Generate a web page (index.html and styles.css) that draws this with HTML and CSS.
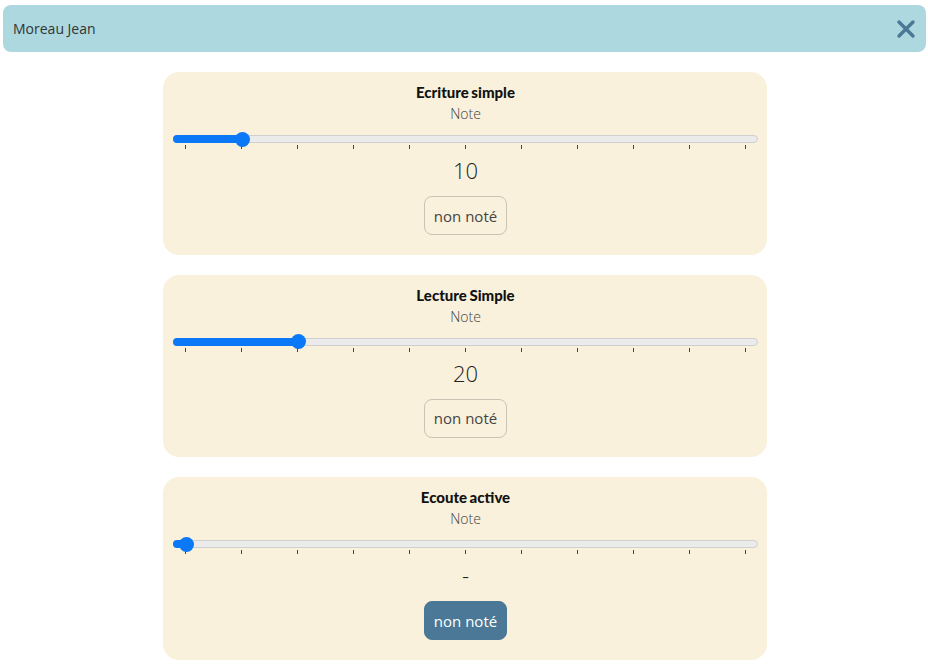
FILE: index.html
```html
<!DOCTYPE html>
<html lang="fr">
<head>
<meta charset="utf-8">
<link rel="stylesheet" href="styles.css">
</head>
<body>
<header class="topbar">
  <span class="name">Moreau Jean</span>
  <button class="close" aria-label="Fermer">
    <svg width="20" height="20" viewBox="0 0 20 20"><path d="M3 3L17 17M17 3L3 17" stroke="#4a7896" stroke-width="3.4" stroke-linecap="round"/></svg>
  </button>
</header>
<main class="list">
  <section class="card">
    <h2 class="title">Ecriture simple</h2>
    <div class="label">Note</div>
    <div class="slider">
      <div class="track"><div class="fill" style="width:68px"></div><div class="thumb" style="left:68px"></div></div>
      <div class="ticks"><i></i><i></i><i></i><i></i><i></i><i></i><i></i><i></i><i></i><i></i><i></i></div>
    </div>
    <div class="value">10</div>
    <button class="btn">non noté</button>
  </section>
  <section class="card">
    <h2 class="title">Lecture Simple</h2>
    <div class="label">Note</div>
    <div class="slider">
      <div class="track"><div class="fill" style="width:124px"></div><div class="thumb" style="left:124px"></div></div>
      <div class="ticks"><i></i><i></i><i></i><i></i><i></i><i></i><i></i><i></i><i></i><i></i><i></i></div>
    </div>
    <div class="value">20</div>
    <button class="btn">non noté</button>
  </section>
  <section class="card">
    <h2 class="title">Ecoute active</h2>
    <div class="label">Note</div>
    <div class="slider">
      <div class="track"><div class="fill" style="width:12px"></div><div class="thumb" style="left:12px"></div></div>
      <div class="ticks"><i></i><i></i><i></i><i></i><i></i><i></i><i></i><i></i><i></i><i></i><i></i></div>
    </div>
    <div class="value">-</div>
    <button class="btn active">non noté</button>
  </section>
</main>
</body>
</html>
```
FILE: styles.css
```css
* { box-sizing: border-box; }
body {
  margin: 0;
  background: #fff;
  font-family: "Open Sans", "Noto Sans", sans-serif;
  color: #333;
}
.topbar {
  margin: 5px 2px 0 3px;
  height: 47px;
  background: #add8e0;
  border-radius: 8px;
  display: flex;
  align-items: center;
  justify-content: space-between;
  padding: 0 10px 0 10px;
}
.name {
  font-size: 14px;
  color: #333;
}
.close {
  border: 0;
  background: none;
  padding: 0;
  width: 20px;
  height: 20px;
  display: flex;
  cursor: pointer;
}
.list {
  width: 604px;
  margin: 20px auto 0 163px;
  display: flex;
  flex-direction: column;
  gap: 20px;
}
.card {
  background: #f9f1dc;
  border-radius: 16px;
  height: 182.5px;
  padding: 11px 9px 0 10px;
  display: flex;
  flex-direction: column;
  align-items: center;
}
.title {
  margin: 0;
  font-family: "Lato", sans-serif;
  font-weight: 900;
  font-size: 15px;
  line-height: 18px;
  letter-spacing: 0;
  word-spacing: -1px;
  color: #111;
}
.label {
  font-size: 14px;
  font-weight: 300;
  line-height: 20px;
  margin-top: 3px;
  color: #444;
}
.slider {
  align-self: stretch;
  margin-top: 9px;
  height: 22px;
}
.track {
  position: relative;
  height: 8px;
  border: 1px solid #cfcfcf;
  border-radius: 4px;
  background: #ebebeb;
  margin-top: 2px;
}
.fill {
  position: absolute;
  left: -1px;
  top: -1px;
  height: 8px;
  background: #0a78f7;
  border-radius: 4px;
}
.thumb {
  position: absolute;
  top: 50%;
  width: 15px;
  height: 15px;
  margin: -7.5px 0 0 -7.5px;
  border-radius: 50%;
  background: #0a78f7;
}
.ticks {
  display: flex;
  justify-content: space-between;
  padding: 0 12px 0 12px;
  margin-top: 2px;
}
.ticks i {
  display: block;
  width: 1px;
  height: 4px;
  background: #444;
}
.value {
  font-size: 22px;
  font-weight: 300;
  line-height: 30px;
  margin-top: 0;
  color: #222;
}
.btn {
  margin-top: 11px;
  height: 39px;
  padding: 0 9px;
  font-family: "Open Sans", sans-serif;
  font-size: 15px;
  font-weight: 400;
  color: #444;
  background: transparent;
  border: 1px solid #c9c3b4;
  border-radius: 8px;
}
.btn.active {
  background: #4a7896;
  border-color: #4a7896;
  color: #fff;
}
```
